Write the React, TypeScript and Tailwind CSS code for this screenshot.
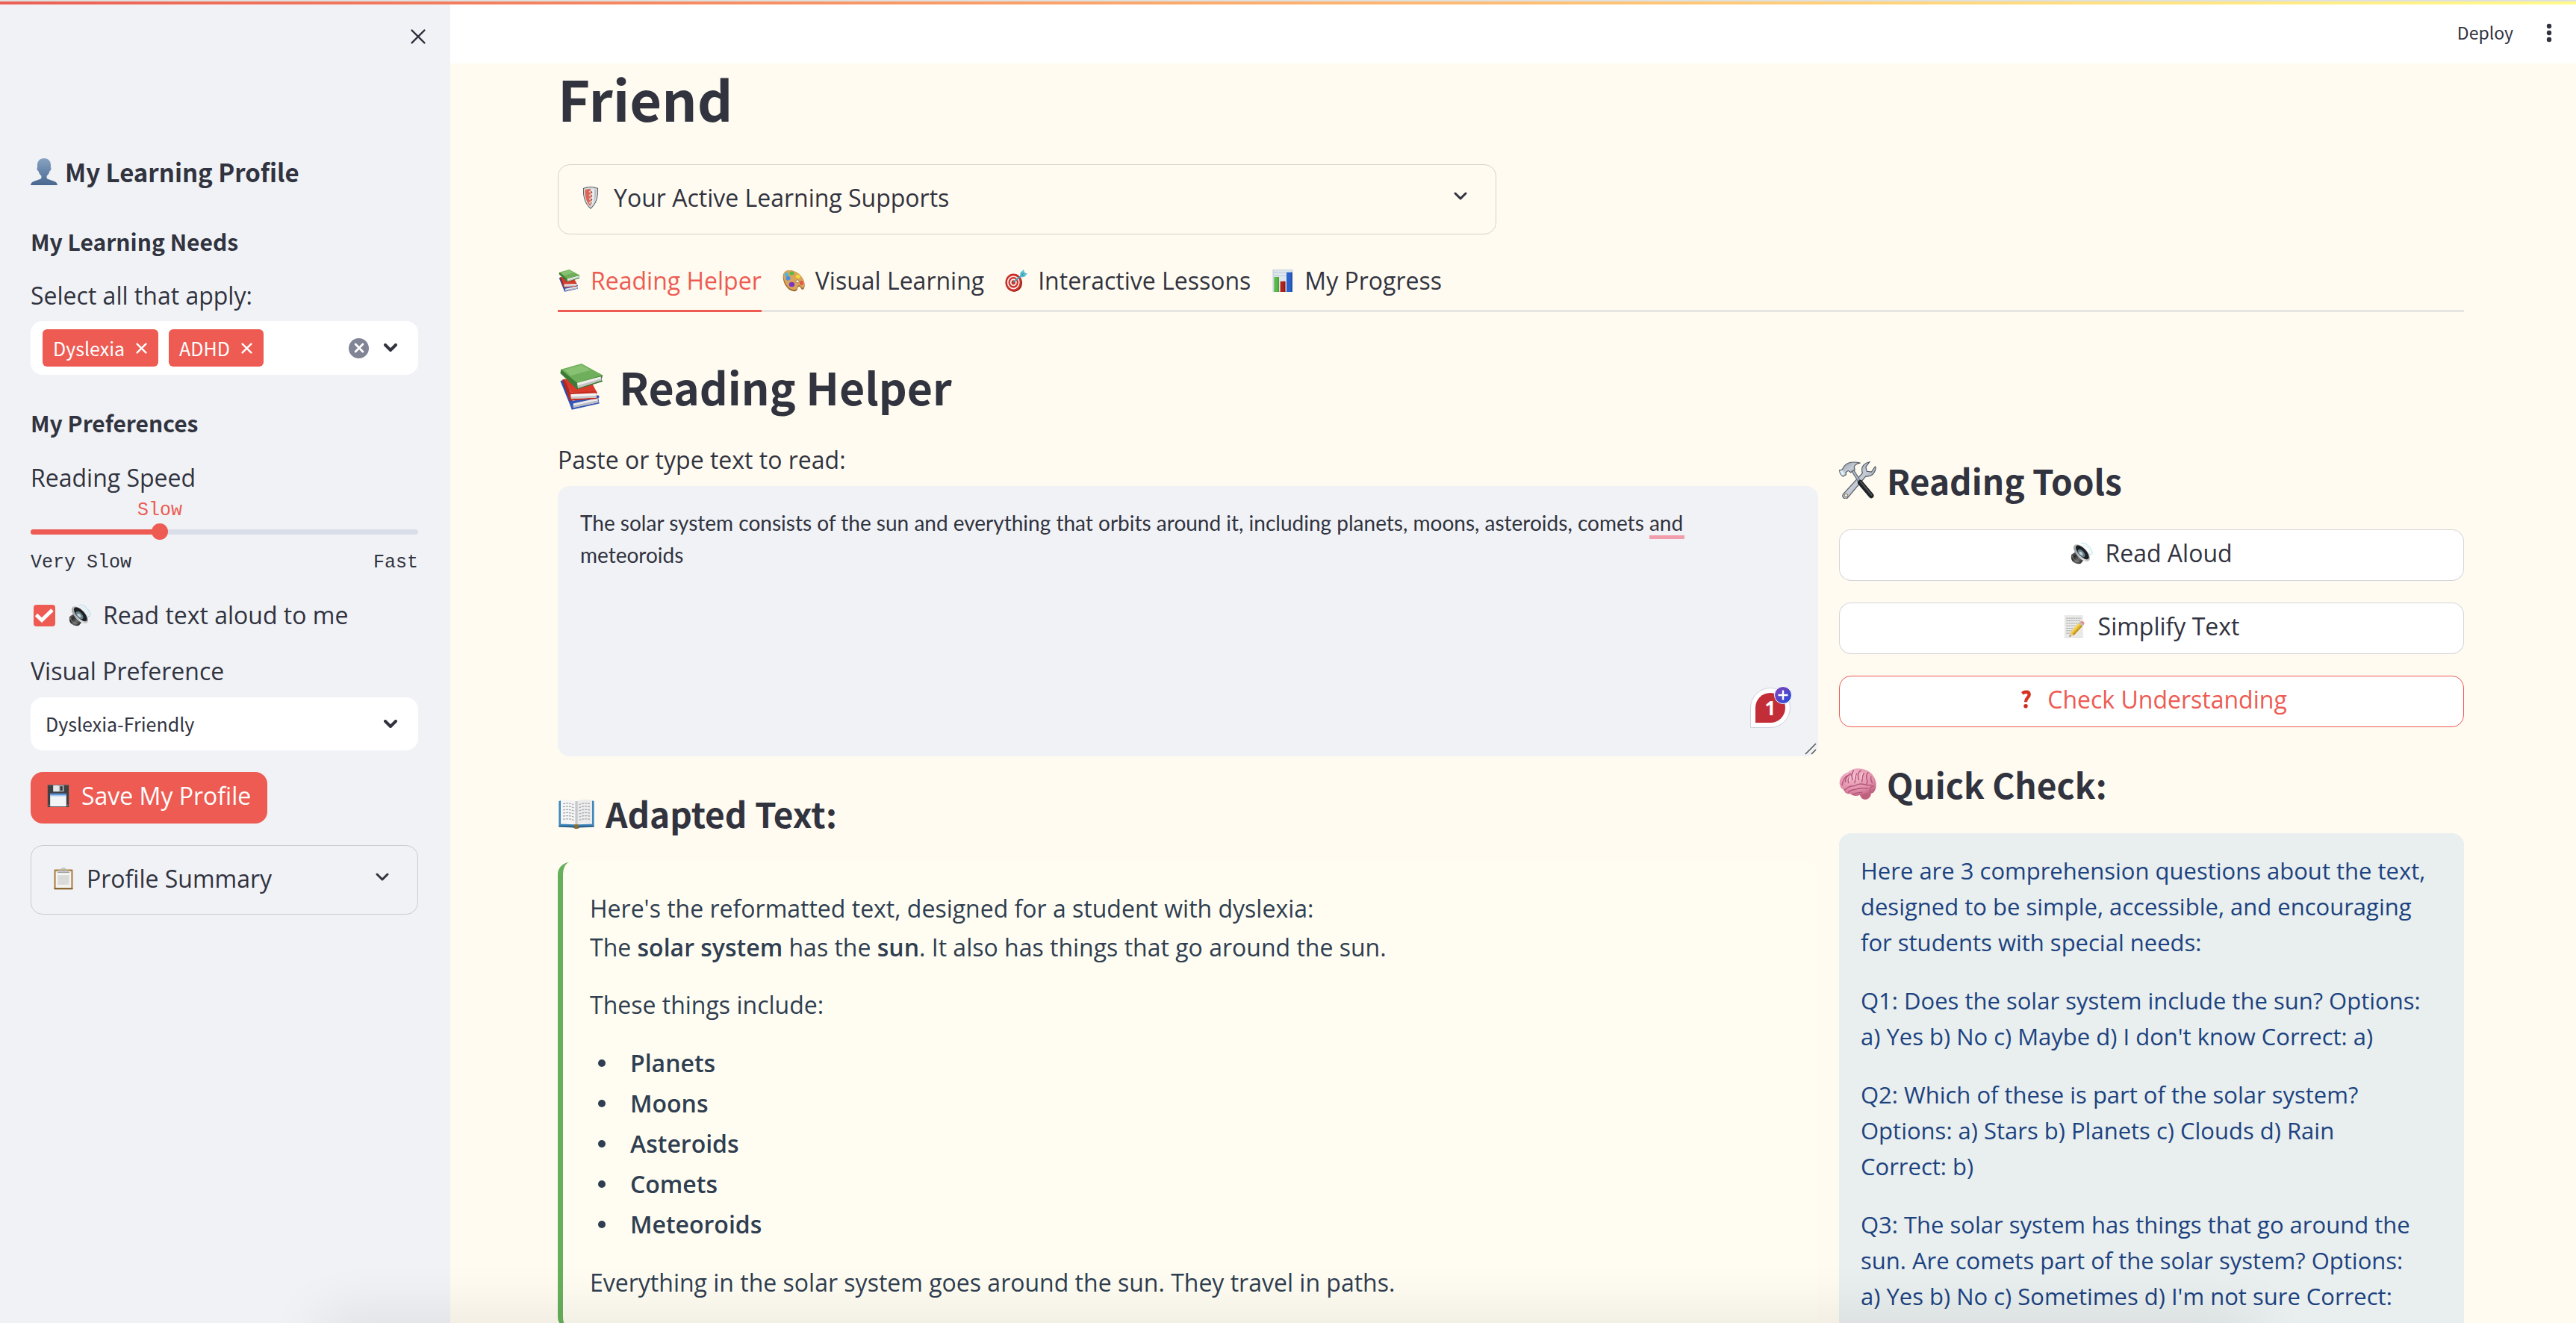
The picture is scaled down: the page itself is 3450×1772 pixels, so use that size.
import React, { useState } from "react";

const body = "font-['Open_Sans','Noto_Sans',sans-serif]";
const heading = "font-['Noto_Sans_CJK_JP','Noto_Sans',sans-serif] font-bold";
const source = "font-['Noto_Sans_CJK_JP','Noto_Sans',sans-serif]";

type IconProps = { className?: string };

function Svg({ className, children }: IconProps & { children: React.ReactNode }) {
  return (
    <svg viewBox="0 0 36 36" aria-hidden="true" className={`shrink-0 ${className ?? ""}`}>
      {children}
    </svg>
  );
}

function PersonIcon({ className }: IconProps) {
  return (
    <Svg className={className}>
      <defs>
        <linearGradient id="person" x1="0" y1="0" x2="0" y2="1">
          <stop offset="0" stopColor="#86a3c3" />
          <stop offset="1" stopColor="#4a6890" />
        </linearGradient>
      </defs>
      <path
        fill="url(#person)"
        d="M18 0c-5.800 0-9.200 4-9 9.500l.2 2.500c-.9.300-.8 1.700-.4 3 .3 1.100.9 2 1.600 2 .7 3 2 5 4 6.500v2.500c0 1-.8 1.500-2 2l-6.400 2.200C2 31.600.2 33.200 0 36h36c-.2-2.800-2-4.400-6-5.800L23.600 28c-1.200-.5-2-1-2-2v-2.500c2-1.500 3.300-3.500 4-6.500.7 0 1.300-.9 1.600-2 .4-1.300.5-2.700-.4-3l.2-2.500C27.200 4 23.800 0 18 0z"
      />
    </Svg>
  );
}

function SpeakerIcon({ className }: IconProps) {
  return (
    <Svg className={className}>
      <defs>
        <linearGradient id="spkBody" x1="0" y1="0" x2="1" y2="1">
          <stop offset="0" stopColor="#8a8a8a" />
          <stop offset=".35" stopColor="#2b2b2b" />
          <stop offset=".6" stopColor="#6b6b6b" />
          <stop offset="1" stopColor="#111" />
        </linearGradient>
        <linearGradient id="spkRim" x1="0" y1="0" x2="1" y2="1">
          <stop offset="0" stopColor="#777" />
          <stop offset=".5" stopColor="#e2e4e6" />
          <stop offset="1" stopColor="#8c8f93" />
        </linearGradient>
      </defs>
      <path fill="url(#spkBody)" d="M1.500 20 9 15l12 14-4 5c-2 1.800-8 1.600-12-1.500C1.500 30 .3 25 1.500 20z" />
      <path fill="none" stroke="#9a9a9a" strokeWidth="1" d="M3 23c1 4.500 5 8 11 8.500" />
      <ellipse cx="18" cy="17.500" rx="8.500" ry="17" transform="rotate(-42 18 17.500)" fill="url(#spkRim)" />
      <ellipse cx="19" cy="16.500" rx="6.200" ry="14.200" transform="rotate(-42 19 16.500)" fill="#1c1f23" />
      <ellipse cx="17.500" cy="18" rx="4.200" ry="7.600" transform="rotate(-42 17.500 18)" fill="#66808a" />
      <ellipse cx="16.800" cy="18.300" rx="2" ry="3.600" transform="rotate(-42 16.800 18.300)" fill="#c6d7dc" />
      <path fill="none" stroke="#a9dcea" strokeWidth="1.200" d="M17 2c3-1.500 8 .5 12 4.500s7 10 5.500 12.500c-1 1.500-3 1-4.500 0" />
      <path fill="none" stroke="#cdeaf2" strokeWidth="1" d="M20 5.500c2-.6 5 .8 7.500 3.300s4 6 3.300 8" />
    </Svg>
  );
}

function FloppyIcon({ className }: IconProps) {
  return (
    <Svg className={className}>
      <path fill="#3f4043" d="M1 0h34v36H1z" />
      <path fill="#55575b" d="M1 0h34v2H1z" />
      <path fill="#b9bcc0" d="M10 1h17v10H10z" />
      <path fill="#e6e7e9" d="M10 1h9v10h-9z" />
      <path fill="#35373a" d="M21 2.500h4v7h-4z" />
      <path fill="#f3f4f6" d="M5 15h26v20H5z" />
      <path fill="#5b93dc" d="M5 14h26v3.500H5z" />
      <path fill="#c9dcf4" d="M5 17.500h26v1.500H5z" />
      <path fill="#8a8c90" d="M2 32h2v2H2zM32 32h2v2h-2z" />
    </Svg>
  );
}

function ClipboardIcon({ className }: IconProps) {
  return (
    <Svg className={className}>
      <rect x="3" y="3" width="30" height="32" rx="1.500" fill="#a9803f" />
      <path fill="#7d5a27" d="M3 33h30v2H3z" />
      <path fill="#f4f4f2" d="M5.500 6h25v26.500h-25z" />
      <path fill="#e0e0de" d="M8.500 12h19v16h-19z" />
      <path stroke="#cfcfcd" strokeWidth=".9" d="M9.500 14h17M9.500 17h17M9.500 20h17M9.500 23h17M9.500 26h12" />
      <path fill="#c2c4c7" d="M8 4.500h20l-1.500 4h-17z" />
      <path fill="#8e9195" d="M8 7.500h20v1H8z" />
      <path fill="none" stroke="#b4b6ba" strokeWidth="1.600" d="M14.500 4.500C14.500 2 16 1 18 1s3.500 1 3.500 3.500" />
    </Svg>
  );
}

function ShieldIcon({ className }: IconProps) {
  return (
    <Svg className={className}>
      <path fill="#4b4f55" d="M18 0c4 0 8 .8 12 2.500.6 12-1.500 25-12 33.500C7.500 27.500 5.400 14.500 6 2.500 10 .8 14 0 18 0z" />
      <path fill="#d5d8db" d="M18 1.200c3.800 0 7.300.7 11 2.200.4 11.500-1.700 23-11 31-9.300-8-11.400-19.500-11-31 3.700-1.500 7.200-2.200 11-2.200z" />
      <path fill="#df6550" d="M18 3.500c-3 0-6 .5-9 1.600-.2 10 1.500 19.500 9 26.700l0-3-3-3 3-3-3-3 3-3-3-3 3-3-3-3 3-2z" />
      <path fill="#e9ebee" d="M18 3.500c3 0 6 .5 9 1.600.2 10-1.500 19.500-9 26.700z" />
      <path fill="#c4412f" d="m18 6 3 3-3 3zM18 12l3 3-3 3zM18 18l3 3-3 3zM18 24l2 2.500-2 3z" />
      <path fill="#b8bdc3" d="M24 4.200c1 .2 2 .5 3 .9.200 8-1 15.500-5 21.500 2-7 2.500-14 2-22.400z" />
    </Svg>
  );
}

function BooksIcon({ className }: IconProps) {
  return (
    <Svg className={className}>
      <path fill="#2b4fb0" d="M2 13.500 5 12.500 12 30l-1 5.800z" />
      <path fill="#3656b8" d="m9.500 29.500 22-5 1 1.500-1 .8.800 4.200L11 35.800z" />
      <path fill="#ececec" d="m12 31 19-4.200.6 3.400-19.500 4z" />
      <path fill="#b9bcc2" d="m12.100 32.600 19.300-4 .2 1.600-19.500 4z" />
      <path fill="#b3261c" d="M3.500 12.500 6 12l6 16.500-3-.5z" />
      <path fill="#d83a2b" d="m5 12 21 2 4.500 8.500H10z" />
      <path fill="#c42d20" d="m8.500 22.500 21.500-1 .6 1.500-1 .8 1 3.600-21.600 1.500z" />
      <path fill="#f4f4f2" d="m10 23.800 19.500-.8.600 3.400-19.600 1z" />
      <path fill="#c7c8ca" d="m10.200 25.800 19.700-1 .2 1.600-19.600 1z" />
      <path fill="#3c7a35" d="m2.500 4.500-.5 3L15 20l20-6-1-1.500 1-3.500z" />
      <path fill="#efefec" d="m15 15 18.500-5 .3 3-18 6z" />
      <path fill="#c3c5c4" d="m15.300 17.200 18.400-5.600.1 1.400-18 6z" />
      <path fill="#6fae5a" d="M2.500 4.500 18.500 0 35 9l-20 6z" />
      <path fill="#87c172" d="M5 4.800 18.300 1l7.500 4.100L10 9.500z" />
    </Svg>
  );
}

function PaletteIcon({ className }: IconProps) {
  return (
    <Svg className={className}>
      <path
        fill="#9c6a2b"
        d="M2 6C6-1 17 0 26 7c8 6.500 11 16 9 22-1 3-3 4-4.500 2.500-1.500-2-2.500-4.500-4.500-4-2.500.6-1 4-3.500 6.500-3 2.500-11 1-16-6C1 21-.5 11 2 6z"
      />
      <path
        fill="#dba45b"
        d="M2.500 5.500C6.500-1 17.500.5 26 6.500c7.500 6 10.500 15.500 8.600 20.800-.9 2.400-2.500 3-3.800 1.700-1.400-1.800-2.600-4-4.800-3.500-2.700.7-1.400 4.200-3.800 6.300-2.700 2.200-10.300.7-15-5.800C2 19.500.5 10.500 2.500 5.500z"
      />
      <ellipse cx="15" cy="6" rx="3.500" ry="3" fill="#58b947" />
      <ellipse cx="6.500" cy="8" rx="3" ry="3.300" fill="#46b8e0" />
      <ellipse cx="9" cy="14" rx="3.600" ry="3.500" fill="#4a90e2" />
      <ellipse cx="25" cy="11" rx="3.600" ry="3" fill="#f2d83a" />
      <ellipse cx="15" cy="24" rx="4.500" ry="4" fill="#7a35c2" />
      <ellipse cx="30.500" cy="21.500" rx="3" ry="3.600" fill="#e4574b" />
      <ellipse cx="24" cy="19" rx="2.600" ry="2.300" fill="#fffbf0" stroke="#8b5e25" strokeWidth=".8" />
    </Svg>
  );
}

function TargetIcon({ className }: IconProps) {
  return (
    <Svg className={className}>
      <ellipse cx="14.500" cy="21.500" rx="13" ry="14.200" fill="#7d120d" />
      <ellipse cx="13.500" cy="20.800" rx="13" ry="14.200" fill="#cb2f27" />
      <ellipse cx="13.500" cy="20.800" rx="10" ry="11" fill="#f4efec" />
      <ellipse cx="13.500" cy="20.800" rx="8" ry="8.800" fill="#cb2f27" />
      <ellipse cx="13.500" cy="20.800" rx="5.400" ry="6" fill="#f4efec" />
      <ellipse cx="13.500" cy="20.800" rx="3.200" ry="3.600" fill="#cb2f27" />
      <path stroke="#3d9fb5" strokeWidth="2" strokeLinecap="round" d="m14 20 13-11" />
      <path fill="#5fc3d6" d="m24 11 .5-6L30 0l1.500 5L36 6.500 31 12l-6 .5z" />
      <path stroke="#2e8ba0" strokeWidth="1" d="m25 11.500 6.500-6.500M27.500 4.500v4M31.500 9h-4" />
    </Svg>
  );
}

function ChartIcon({ className }: IconProps) {
  return (
    <Svg className={className}>
      <path fill="#dde5ee" d="M2 0h32v36H2z" />
      <path fill="none" stroke="#b9c6d4" strokeWidth="1" d="M2.500.5h31v35h-31zM3 5h30M3 10h30" />
      <path fill="#5bb947" d="M4 12h8v24H4z" />
      <path fill="#4a9e38" d="M10 12h2v24h-2z" />
      <path fill="#b0241c" d="M14 19h8v17h-8z" />
      <path fill="#8f1a14" d="M20 19h2v17h-2z" />
      <path fill="#2a62c9" d="M24 4.500h9V36h-9z" />
      <path fill="#1d4ba5" d="M31 4.500h2V36h-2z" />
    </Svg>
  );
}

function OpenBookIcon({ className }: IconProps) {
  return (
    <Svg className={className}>
      <path fill="#3f87bd" d="M1 6.500 3 6v22.500l13 .5h4l13-.5V6l2 .5V31l-14 .5c-1 1.200-5 1.200-6 0L1 31z" />
      <path fill="#2c6491" d="M1 30h14c1 1 5 1 6 0h14v1.500L21 32c-1 1.200-5 1.200-6 0L1 31.500z" />
      <path fill="#f5f5f5" d="M3 5.500C8 4.500 14 4.500 18 7v22.500c-4-2-10-2-15-1z" />
      <path fill="#ececec" d="M33 5.500c-5-1-11-1-15 1.500v22.500c4-2 10-2 15-1z" />
      <path fill="#b5b8bb" d="M16.800 6.500h2.400v23h-2.400z" opacity=".7" />
      <path fill="#8a6d2c" d="M16 29h4v3.500l-2 .8-2-.8z" />
      <path
        fill="none"
        stroke="#a8abae"
        strokeWidth=".9"
        strokeDasharray="2.200 .7"
        d="M5 9c4-.7 7-.5 10.500.8M5 12c4-.7 7-.5 10.500.8M5 15c4-.7 7-.5 10.500.8M5 18c4-.7 7-.5 10.500.8M5 21c4-.7 7-.5 10.500.8M5 24c4-.7 7-.5 10.500.8M31 9c-4-.7-7-.5-10.500.8M31 12c-4-.7-7-.5-10.500.8M31 15c-4-.7-7-.5-10.500.8M31 18c-4-.7-7-.5-10.500.8M31 21c-4-.7-7-.5-10.500.8M31 24c-4-.7-7-.5-10.500.8"
      />
    </Svg>
  );
}

function ToolsIcon({ className }: IconProps) {
  return (
    <Svg className={className}>
      <defs>
        <linearGradient id="steel" x1="0" y1="0" x2="1" y2="1">
          <stop offset="0" stopColor="#8d98a6" />
          <stop offset=".5" stopColor="#c5ccd6" />
          <stop offset="1" stopColor="#6b7482" />
        </linearGradient>
      </defs>
      <path
        fill="url(#steel)"
        stroke="#4e5661"
        strokeWidth=".8"
        d="M29.500.5c-4 .5-7.500 3.500-7.500 7.500 0 1.300.2 2.400.6 3.300L4.200 31.200c-1.200 1.300-.9 3.200.3 4.200 1.200 1 3 .8 4-.6L25.800 14.300c4 .8 8.700-1.500 9.700-8.300L34.800 5l-3.600 5.200-4.400-.7-1-4.200z"
      />
      <circle cx="6.800" cy="32.800" r="1.600" fill="#f3ece0" stroke="#6f665a" strokeWidth=".7" />
      <path stroke="#6d7682" strokeWidth="3.200" d="m11.500 6 8 13" />
      <path stroke="#b8c0cb" strokeWidth="1.200" d="m11.500 6 8 13" />
      <path stroke="#1f2326" strokeWidth="5" strokeLinecap="round" d="m20.500 20.500 10.500 12.500" />
      <path stroke="#4f565b" strokeWidth="1.200" strokeLinecap="round" d="m20.500 19.500 11 13" />
      <path
        fill="url(#steel)"
        stroke="#4e5661"
        strokeWidth=".8"
        d="M.4 8.500 3 8l2-3.500C8 1 14 0 20.500 1.500c-3 .3-5 1.500-6 3.800l.8 2.500-4 2.800-2.500-1.700-2.300 1.800.3 2-3 1.800C2.200 13.500.6 11.500.4 8.500z"
      />
      <path fill="#d9eef8" d="m.8 9 2.500-.3 2.300 3.300-2 1.700C2 13 1 11 .8 9z" />
    </Svg>
  );
}

function MemoIcon({ className }: IconProps) {
  return (
    <Svg className={className}>
      <path fill="#e9e9e7" d="M1 0h30v36H1z" />
      <path fill="#d5d5d3" d="M1 35h30v1H1z" />
      <path
        stroke="#a3a3a1"
        strokeWidth="1.200"
        strokeDasharray="3 .8"
        d="M4 5h24M4 9h22M4 13h23M4 17h16M4 21h12M4 25h10M4 29h6"
      />
      <path fill="#e2b52f" d="m24 12.500 6 5-14 15-5.500-4.500z" />
      <path fill="#f4d65c" d="m24 12.500 2.500 2-14 15.300-2-1.800z" />
      <path fill="#c08e1c" d="m28.500 16.300 1.500 1.200-14 15-1.500-1.200z" />
      <path fill="#e8c9a0" d="m10.500 28 5.500 4.500-7 2z" />
      <path fill="#3a3a3a" d="m9.600 32 1.600 1.600-2.200.9z" />
      <path fill="#b9bcc0" d="m26 10.500 6 5-2 2.200-6-5z" />
      <path fill="#ea8b8b" d="M26 10.500c2-1.500 4.500-1.300 6 .2s1.600 3.300 0 4.800z" />
    </Svg>
  );
}

function QuestionIcon({ className }: IconProps) {
  return (
    <Svg className={className}>
      <path
        fill="none"
        stroke="#d43324"
        strokeWidth="6"
        d="M11.500 6.500c2.500-1.800 5-2.700 7-2.700 4 0 6 2.200 6 5.200 0 5-6.500 5.500-6.500 13.500"
      />
      <circle cx="18" cy="30" r="3.800" fill="#c92c1f" />
    </Svg>
  );
}

function BrainIcon({ className }: IconProps) {
  return (
    <Svg className={className}>
      <defs>
        <radialGradient id="brain" cx=".4" cy=".25" r=".8">
          <stop offset="0" stopColor="#f4bccb" />
          <stop offset=".7" stopColor="#e08da8" />
          <stop offset="1" stopColor="#bd5f7f" />
        </radialGradient>
      </defs>
      <path fill="#c0607f" d="M20 27c2-2.500 9-3 10.500-1 1.200 2.500-1 6.500-4.500 7-3.500.4-6-2.500-6-6z" />
      <path
        fill="url(#brain)"
        d="M9 6.500C12 3.500 17 2.500 22 3.500c6 1 10.500 4.500 12.500 9.500 2 4.500 1.500 10-1 13-2 1.800-4 1.500-6 1-3 .5-6 1-8 2-3 1-7 .5-8.500-1.500C8 28 5 26.500 5 24 2.500 23 .5 20.500.5 17c0-5 3.500-9 8.500-10.500z"
      />
      <path
        fill="none"
        stroke="#b4557a"
        strokeWidth="1"
        strokeLinecap="round"
        d="M3 19c1-5 3-8 5-9M6 16c0-3 2-6 5-8M9 17c-1-3 1-7 4-9M14 5c-2 3-2 6-1 9M17 8c-2 3-1 6-2 9M21 5c-3 2-3 6-2 9M24 8c-2 2-1 5-2 8M28 7c-2 2-2 4-1 7 1 2 0 3-1 5M31 11c-1 2 0 4 1 6M5 24c2-1 4-4 8-4 3 0 4-2 8-2s6 2 10 1M9 26c2-3 5-2 8-3 4-2 8 0 11-1M14 28c2-2 5-1 8-2M33 20c-2 0-4 3-3 6"
      />
      <path fill="none" stroke="#fbdde5" strokeWidth=".8" strokeLinecap="round" d="M11 10c-1 2-1.500 3-1 5M15.500 9c-1 2-1 3-1 5M22.500 8c-1 2-.8 3-1 5" />
    </Svg>
  );
}

function Chevron({ className }: IconProps) {
  return (
    <svg viewBox="0 0 20 12" fill="none" stroke="currentColor" strokeLinecap="round" strokeLinejoin="round" aria-hidden="true" className={`h-3 w-5 shrink-0 ${className ?? ""}`}>
      <path d="m3 2 7 7 7-7" />
    </svg>
  );
}

function Cross({ className }: IconProps) {
  return (
    <svg viewBox="0 0 20 20" fill="none" stroke="currentColor" strokeLinecap="round" aria-hidden="true" className={className}>
      <path d="m3 3 14 14M17 3 3 17" />
    </svg>
  );
}

function Tag({ label }: { label: string }) {
  return (
    <span className="flex h-[50px] items-center gap-[14px] rounded-md bg-[#ed5b53] px-[14px] text-white">
      {label}
      <button type="button" aria-label={`Remove ${label}`}>
        <Cross className="size-[17px] stroke-[2.800]" />
      </button>
    </span>
  );
}

function Expander({ icon, label }: { icon: React.ReactNode; label: string }) {
  return (
    <button type="button" aria-expanded="false" className="flex w-full items-center gap-4 rounded-2xl border border-[#31333F]/20 pr-[37px] pl-[28px] pb-1 text-[32px] leading-[44px]">
      {icon}
      <span className="flex-1 text-left">{label}</span>
      <Chevron className="mb-1 stroke-[3]" />
    </button>
  );
}

function Sidebar() {
  const speeds = ["Very Slow", "Slow", "Normal", "Fast"];
  const [speed, setSpeed] = useState(1);
  const percent = (speed / 3) * 100;
  return (
    <aside className="flex w-[603px] shrink-0 flex-col bg-[#f0f2f6] pr-[43px] pl-[41px]">
      <div className="flex h-[204px] justify-end pt-[31px]">
        <button type="button" aria-label="Close sidebar" className="-mr-3 size-6">
          <Cross className="size-full stroke-2" />
        </button>
      </div>
      <h2 className={`${heading} flex items-center gap-[10px] text-[33px] leading-10`}>
        <PersonIcon className="size-9" />
        My Learning Profile
      </h2>
      <h3 className={`${heading} mt-[55px] text-[30px] leading-9`}>My Learning Needs</h3>
      <p id="needs-label" className="mt-[35px] text-[32px] leading-10">Select all that apply:</p>
      <div role="group" aria-labelledby="needs-label" className={`${source} mt-[14px] flex h-[72px] items-center gap-[14px] rounded-2xl bg-white pr-[27px] pl-4 text-[25px] leading-10`}>
        <Tag label="Dyslexia" />
        <Tag label="ADHD" />
        <button type="button" aria-label="Clear all" className="ml-auto flex size-[27px] items-center justify-center rounded-full bg-[#808495] text-white">
          <Cross className="size-[14px] stroke-[4]" />
        </button>
        <button type="button" aria-label="Open list" className="ml-[5px]">
          <Chevron className="stroke-[4]" />
        </button>
      </div>
      <h3 className={`${heading} mt-[46px] text-[30px] leading-9`}>My Preferences</h3>
      <label htmlFor="speed" className="mt-9 text-[32px] leading-10">Reading Speed</label>
      <div className="mt-3 font-['Liberation_Mono',monospace] text-[25px] leading-6">
        <div className="flex text-[#ed5b53]">
          <span className="-translate-x-1/2" style={{ marginLeft: `${percent}%` }}>{speeds[speed]}</span>
        </div>
        <div className="relative mt-[2px] flex h-7 items-center">
          <div className="h-[7px] w-full overflow-hidden rounded-full bg-[#dadee8]">
            <div className="h-full bg-[#ed5b53]" style={{ width: `${percent}%` }} />
          </div>
          <input
            id="speed"
            type="range"
            min={0}
            max={3}
            value={speed}
            onChange={(e) => setSpeed(Number(e.target.value))}
            className="absolute -inset-x-[11px] h-[22px] appearance-none bg-transparent [&::-webkit-slider-thumb]:size-[22px] [&::-webkit-slider-thumb]:appearance-none [&::-webkit-slider-thumb]:rounded-full [&::-webkit-slider-thumb]:bg-[#ed5b53]"
          />
        </div>
        <div className="mt-4 flex justify-between">
          <span>Very Slow</span>
          <span>Fast</span>
        </div>
      </div>
      <label className="mt-9 flex items-center pl-1 text-[32px] leading-[44px]">
        <span className="relative flex size-[29px] shrink-0">
          <input type="checkbox" defaultChecked className="size-full appearance-none rounded-sm bg-[#ed5b53]" />
          <svg viewBox="0 0 29 29" fill="none" stroke="white" strokeWidth="5" aria-hidden="true" className="pointer-events-none absolute inset-0">
            <path d="m3.500 13.500 7.500 7L25 7" />
          </svg>
        </span>
        <SpeakerIcon className="mr-4 ml-[18px] size-[30px]" />
        Read text aloud to me
      </label>
      <label htmlFor="visual" className="mt-[33px] text-[32px] leading-10">Visual Preference</label>
      <div className={`${source} relative mt-[15px] flex items-center`}>
        <select id="visual" className="h-[71px] w-full appearance-none rounded-2xl bg-white pl-5 text-[25px]">
          <option>Dyslexia-Friendly</option>
        </select>
        <Chevron className="pointer-events-none absolute right-[27px] stroke-[4]" />
      </div>
      <button type="button" className="mt-[29px] flex h-[69px] items-center gap-4 self-start rounded-2xl bg-[#ed5b53] px-[22px] pb-[5px] text-[32px] text-white">
        <FloppyIcon className="size-[30px]" />
        Save My Profile
      </button>
      <div className="mt-[29px] grid h-[93px]">
        <Expander icon={<ClipboardIcon className="size-[30px]" />} label="Profile Summary" />
      </div>
    </aside>
  );
}

const tabs = [
  { label: "Reading Helper", Icon: BooksIcon },
  { label: "Visual Learning", Icon: PaletteIcon },
  { label: "Interactive Lessons", Icon: TargetIcon },
  { label: "My Progress", Icon: ChartIcon },
];

function SectionTitle({ icon, children }: { icon: React.ReactNode; children: React.ReactNode }) {
  return (
    <h3 className={`${heading} mt-12 flex items-center gap-[14px] text-[46px] leading-[56px]`}>
      {icon}
      {children}
    </h3>
  );
}

function ToolButton({ icon, label, active }: { icon: React.ReactNode; label: string; active?: boolean }) {
  return (
    <button
      type="button"
      className={`flex h-[69px] items-center justify-center gap-4 rounded-2xl border bg-white pb-[6px] text-[32px] ${active ? "border-[#ed5b53] text-[#ed5b53]" : "border-[#31333F]/20"}`}
    >
      {icon}
      {label}
    </button>
  );
}

function Editor() {
  return (
    <div>
      <label htmlFor="source-text" className="block text-[32px] leading-[44px]">Paste or type text to read:</label>
      <div className="relative mt-[13px] flex">
        <textarea
          id="source-text"
          spellCheck={false}
          className="h-[362px] w-full resize-none rounded-2xl bg-[#f0f2f6] pt-7 pr-12 pl-[30px] font-['Lato',sans-serif] text-[28px] leading-[43px]"
          defaultValue="The solar system consists of the sun and everything that orbits around it, including planets, moons, asteroids, comets and meteoroids"
        />
        <span className="absolute top-[66px] left-[1462px] h-[5px] w-[47px] bg-[#f29dac]" />
        <button type="button" aria-label="1 writing suggestion" className="absolute right-[37px] bottom-[38px] size-[54px] rounded-full rounded-bl-none border border-[#cfd1de] bg-white p-[6px]">
          <span className="flex size-full items-center justify-center rounded-full rounded-bl-none bg-[#c22d38] font-['Noto_Sans',sans-serif] text-[26px] leading-6 font-bold text-white">1</span>
          <svg viewBox="0 0 24 24" aria-hidden="true" className="absolute -top-[3px] -right-[3px] size-6">
            <defs>
              <linearGradient id="plus" x1="0" y1="0" x2="1" y2="1">
                <stop offset=".15" stopColor="#7b45bd" />
                <stop offset=".85" stopColor="#2c4bd8" />
              </linearGradient>
            </defs>
            <circle cx="12" cy="12" r="11.500" fill="url(#plus)" stroke="white" />
            <path stroke="white" strokeWidth="2.400" d="M12 5.500v13M5.500 12h13" />
          </svg>
        </button>
        <svg viewBox="0 0 16 16" stroke="#555" strokeWidth="1.500" aria-hidden="true" className="pointer-events-none absolute right-[2px] bottom-[2px] size-4">
          <path d="M1 15 15 1M9 15l6-6" />
        </svg>
      </div>
      <SectionTitle icon={<OpenBookIcon className="size-[50px]" />}>Adapted Text:</SectionTitle>
      <article className="mt-[38px] flex flex-col gap-[25px] rounded-2xl border-l-[7px] border-[#66b05b] bg-[#fffdf2] px-9 py-9 text-[32px] leading-[52px] text-[#2f3e50]">
        <p>
          Here's the reformatted text, designed for a student with dyslexia:
          <br />
          The <strong className="font-semibold">solar system</strong> has the <strong className="font-semibold">sun</strong>. It also has things that go around the sun.
        </p>
        <p>These things include:</p>
        <ul className="pl-[11px] leading-[54px] font-semibold">
          {["Planets", "Moons", "Asteroids", "Comets", "Meteoroids"].map((item) => (
            <li key={item} className="flex items-center gap-[33px] before:size-[10px] before:rounded-full before:bg-current">
              {item}
            </li>
          ))}
        </ul>
        <p>Everything in the solar system goes around the sun. They travel in paths.</p>
      </article>
    </div>
  );
}

function Tools() {
  return (
    <div>
      <h3 className={`${heading} mt-[21px] flex items-center gap-[14px] text-[46px] leading-[56px]`}>
        <ToolsIcon className="size-[50px]" />
        Reading Tools
      </h3>
      <div className="mt-[38px] grid gap-[29px]">
        <ToolButton icon={<SpeakerIcon className="size-[30px]" />} label="Read Aloud" />
        <ToolButton icon={<MemoIcon className="size-[30px]" />} label="Simplify Text" />
        <ToolButton icon={<QuestionIcon className="size-[26px]" />} label="Check Understanding" active />
      </div>
      <SectionTitle icon={<BrainIcon className="size-[50px]" />}>Quick Check:</SectionTitle>
      <div className="mt-[38px] flex flex-col gap-[30px] rounded-2xl bg-[#e9eeee] px-[29px] py-[26px] text-[31px] leading-[48px] text-[#1c4380]">
        <p>Here are 3 comprehension questions about the text, designed to be simple, accessible, and encouraging for students with special needs:</p>
        <p>Q1: Does the solar system include the sun? Options: a) Yes b) No c) Maybe d) I don't know Correct: a)</p>
        <p>
          Q2: Which of these is part of the solar system? Options: a) Stars b) Planets c) Clouds d) Rain
          <br />
          Correct: b)
        </p>
        <p>
          Q3: The solar system has things that go around the sun. Are comets part of the solar system? Options:
          <br />
          a) Yes b) No c) Sometimes d) I'm not sure Correct:
        </p>
      </div>
    </div>
  );
}

export default function App() {
  const [tab, setTab] = useState(0);
  return (
    <div className={`${body} relative flex h-screen flex-col overflow-hidden bg-[#fffbf0] text-[#31333F]`}>
      <div className="h-[2px] shrink-0 bg-[#e0e0de]" />
      <div className="h-1 shrink-0 bg-linear-to-r from-[#ec5f55] to-[#fffb8a]" />
      <div className="flex min-h-0 flex-1">
        <Sidebar />
        <div className="flex min-w-0 flex-1 flex-col">
          <header className={`${source} flex h-[79px] shrink-0 items-center justify-end gap-[44px] bg-white pr-8 pb-1`}>
            <button type="button" className="text-[23px]">Deploy</button>
            <button type="button" aria-label="Main menu">
              <svg viewBox="0 0 8 26" fill="currentColor" aria-hidden="true" className="h-[26px] w-2">
                <circle cx="4" cy="4" r="3.200" />
                <circle cx="4" cy="13" r="3.200" />
                <circle cx="4" cy="22" r="3.200" />
              </svg>
            </button>
          </header>
          <main className="min-h-0 flex-1 pt-[3px] pr-[150px] pl-36">
            <h1 className={`${heading} text-[74px] leading-[86px]`}>Friend</h1>
            <div className="mt-[46px] grid h-[94px] w-[1257px]">
              <Expander icon={<ShieldIcon className="size-[30px]" />} label="Your Active Learning Supports" />
            </div>
            <div role="tablist" className="mt-8 flex gap-7 border-b-[3px] border-[#e7e5df] text-[32px]">
              {tabs.map(({ label, Icon }, i) => (
                <button
                  key={label}
                  type="button"
                  role="tab"
                  aria-selected={tab === i}
                  onClick={() => setTab(i)}
                  className={`-mb-[3px] flex h-[72px] items-center gap-[14px] border-b-[3px] pb-[10px] ${tab === i ? "border-[#ed5b53] text-[#ed5b53]" : "border-transparent"}`}
                >
                  <Icon className="size-[30px]" />
                  {label}
                </button>
              ))}
            </div>
            <h2 className={`${heading} mt-[65px] flex items-center gap-5 text-[59px] leading-[70px]`}>
              <BooksIcon className="size-[62px]" />
              Reading Helper
            </h2>
            <div className="mt-[41px] grid grid-cols-[1688fr_837fr] gap-7">
              <Editor />
              <Tools />
            </div>
          </main>
        </div>
      </div>
      <div className="pointer-events-none absolute inset-x-[430px] -bottom-10 h-10 shadow-[0_0_80px_rgba(0,0,0,0.14)]" />
    </div>
  );
}
